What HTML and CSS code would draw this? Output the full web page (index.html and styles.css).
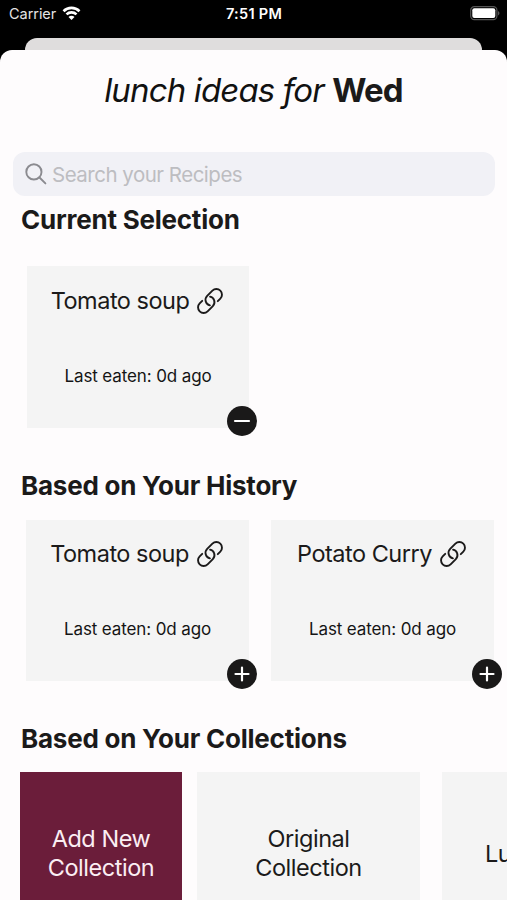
FILE: index.html
```html
<!DOCTYPE html>
<html lang="en">
<head>
<meta charset="utf-8">
<title>Lunch ideas</title>
<link rel="stylesheet" href="styles.css">
</head>
<body>
<svg class="defs" aria-hidden="true">
  <symbol id="link" viewBox="-13 -13 26 26">
    <g transform="rotate(-45)" fill="none" stroke="currentColor" stroke-width="1.9" stroke-linecap="round">
      <path d="M5.4 5.6H9A5.6 5.6 0 0 0 9-5.6H1.6A5.6 5.6 0 0 0-3.1 3"/>
      <path d="M-5.4-5.6H-9A5.6 5.6 0 0 0-9 5.6H-1.6A5.6 5.6 0 0 0 3.1-3"/>
    </g>
  </symbol>
</svg>
<header class="status">
  <div class="carrier"><span>Carrier</span>
    <svg class="wifi" viewBox="0 0 18 14"><g fill="none" stroke="#fff" stroke-width="2.6"><path d="M1 5.2a11.4 11.4 0 0 1 16 0"/><path d="M4 8.4a7.1 7.1 0 0 1 10 0"/></g><path fill="#fff" d="M9 14 6 11a4.2 4.2 0 0 1 6 0z"/></svg>
  </div>
  <time>7:51 PM</time>
  <svg class="battery" viewBox="0 0 30 15"><rect x=".7" y=".7" width="26.2" height="13" rx="3.6" fill="none" stroke="#555" stroke-width="1.2"/><rect x="2.3" y="2.3" width="23" height="9.8" rx="2" fill="#fff"/><path d="M28 5v4.4c2-.8 2-3.6 0-4.4z" fill="#555"/></svg>
</header>
<div class="behind"></div>
<main class="sheet">
  <h1><em>lunch ideas for</em> <b>Wed</b></h1>
  <div class="search">
    <svg viewBox="0 0 22 22" fill="none" stroke="#8b8b90" stroke-width="1.9" stroke-linecap="round"><circle cx="8.9" cy="8.9" r="7.6"/><path d="m14.5 14.5 5.9 5.9"/></svg>
    <span>Search your Recipes</span>
  </div>
  <section class="current">
    <h2>Current Selection</h2>
    <div class="row">
      <article class="card"><h3><span>Tomato soup</span><svg class="link"><use href="#link"/></svg></h3><p>Last eaten: 0d ago</p>
        <svg class="badge" viewBox="0 0 30 30"><circle cx="15" cy="15" r="15"/><path d="M8 15h14"/></svg></article>
    </div>
  </section>
  <section class="history">
    <h2>Based on Your History</h2>
    <div class="row">
      <article class="card"><h3><span>Tomato soup</span><svg class="link"><use href="#link"/></svg></h3><p>Last eaten: 0d ago</p>
        <svg class="badge" viewBox="0 0 30 30"><circle cx="15" cy="15" r="15"/><path d="M8.5 15h13M15 8.5v13"/></svg></article>
      <article class="card"><h3><span>Potato Curry</span><svg class="link"><use href="#link"/></svg></h3><p>Last eaten: 0d ago</p>
        <svg class="badge" viewBox="0 0 30 30"><circle cx="15" cy="15" r="15"/><path d="M8.5 15h13M15 8.5v13"/></svg></article>
    </div>
  </section>
  <section class="collections">
    <h2>Based on Your Collections</h2>
    <div class="tiles">
      <div class="tile add">Add New<br>Collection</div>
      <div class="tile">Original<br>Collection</div>
      <div class="tile cut">Lu</div>
    </div>
  </section>
</main>
</body>
</html>
```
FILE: styles.css
```css
* { box-sizing: border-box; margin: 0; }
body { height: 900px; overflow: hidden; background: #000; color: #1b1a1a; font-family: Inter, "Liberation Sans", sans-serif; }
.defs { display: none; }
svg { flex: none; }
.status { height: 38px; padding: 0 7px 0 9px; display: grid; grid-template-columns: 1fr auto 1fr; align-items: start; color: #fff; font-size: 14.5px; line-height: 28px; }
.carrier { display: flex; gap: 6px; color: #e4e4e4; }
.carrier span { letter-spacing: -.05px; }
.wifi { width: 19px; height: 14px; margin-top: 6px; }
.status time { font-weight: 600; letter-spacing: .3px; margin-right: 1px; }
.battery { width: 30px; height: 15px; justify-self: end; margin-top: 6px; }
.behind { height: 26px; margin: 0 25px; border-radius: 12px 12px 0 0; background: #dfdddd; }
.sheet { height: 850px; margin-top: -14px; overflow: hidden; border-radius: 12px 12px 0 0; background: #fefcfd; position: relative; }
h1 { height: 102px; padding-top: 19px; text-align: center; font-size: 33px; line-height: 42px; font-weight: 400; color: #111; letter-spacing: -.85px; white-space: nowrap; }
h1 b { font-weight: 700; color: #1b1a1a; }
.search { height: 44px; margin: 0 12px 0 13px; padding-left: 12px; display: flex; align-items: center; gap: 5px; border-radius: 12px; background: #f1f1f6; color: #bdbdc1; font-size: 20.5px; letter-spacing: -.5px; }
.search svg { width: 22px; height: 22px; }
h2 { height: 48px; padding-left: 21px; font-size: 26px; line-height: 48px; font-weight: 700; letter-spacing: -.23px; white-space: nowrap; }
.row { display: flex; gap: 22px; padding: 22px 0 0 27px; }
.card { width: 222px; height: 162px; flex: none; position: relative; background: #f4f4f4; display: flex; flex-direction: column; align-items: center; }
h3 { margin-top: 18px; height: 34px; display: flex; align-items: center; gap: 8px; font-size: 23.5px; line-height: 34px; font-weight: 400; white-space: nowrap; letter-spacing: -.5px; }
.link { width: 26px; height: 26px; }
.card h3 { padding-right: 2px; }
.card p { margin-top: 46px; font-size: 17px; line-height: 24px; letter-spacing: -.12px; color: #151515; }
.badge { position: absolute; right: -8px; bottom: -8px; width: 30px; height: 30px; fill: #1a1919; stroke: #fff; stroke-width: 2.2; stroke-linecap: round; }
.badge circle { stroke: none; }
.current { height: 266px; }
.history { height: 253px; }
.history .row { padding-top: 10px; gap: 22px; padding-left: 26px; }
.history .card { width: 223px; height: 161px; }
.history h3 { margin-top: 17px; }
.tiles { display: flex; padding: 9px 0 0 20px; }
.tile { flex: none; width: 223px; height: 162px; margin-right: 22px; background: #f4f4f4; display: flex; align-items: center; justify-content: center; text-align: center; font-size: 23.5px; line-height: 29px; letter-spacing: -.45px; }
.tile.add { width: 162px; margin-right: 15px; background: #6b1d3a; color: #fbeef3; }
.tile.cut { justify-content: flex-start; padding-left: 43px; }
```
